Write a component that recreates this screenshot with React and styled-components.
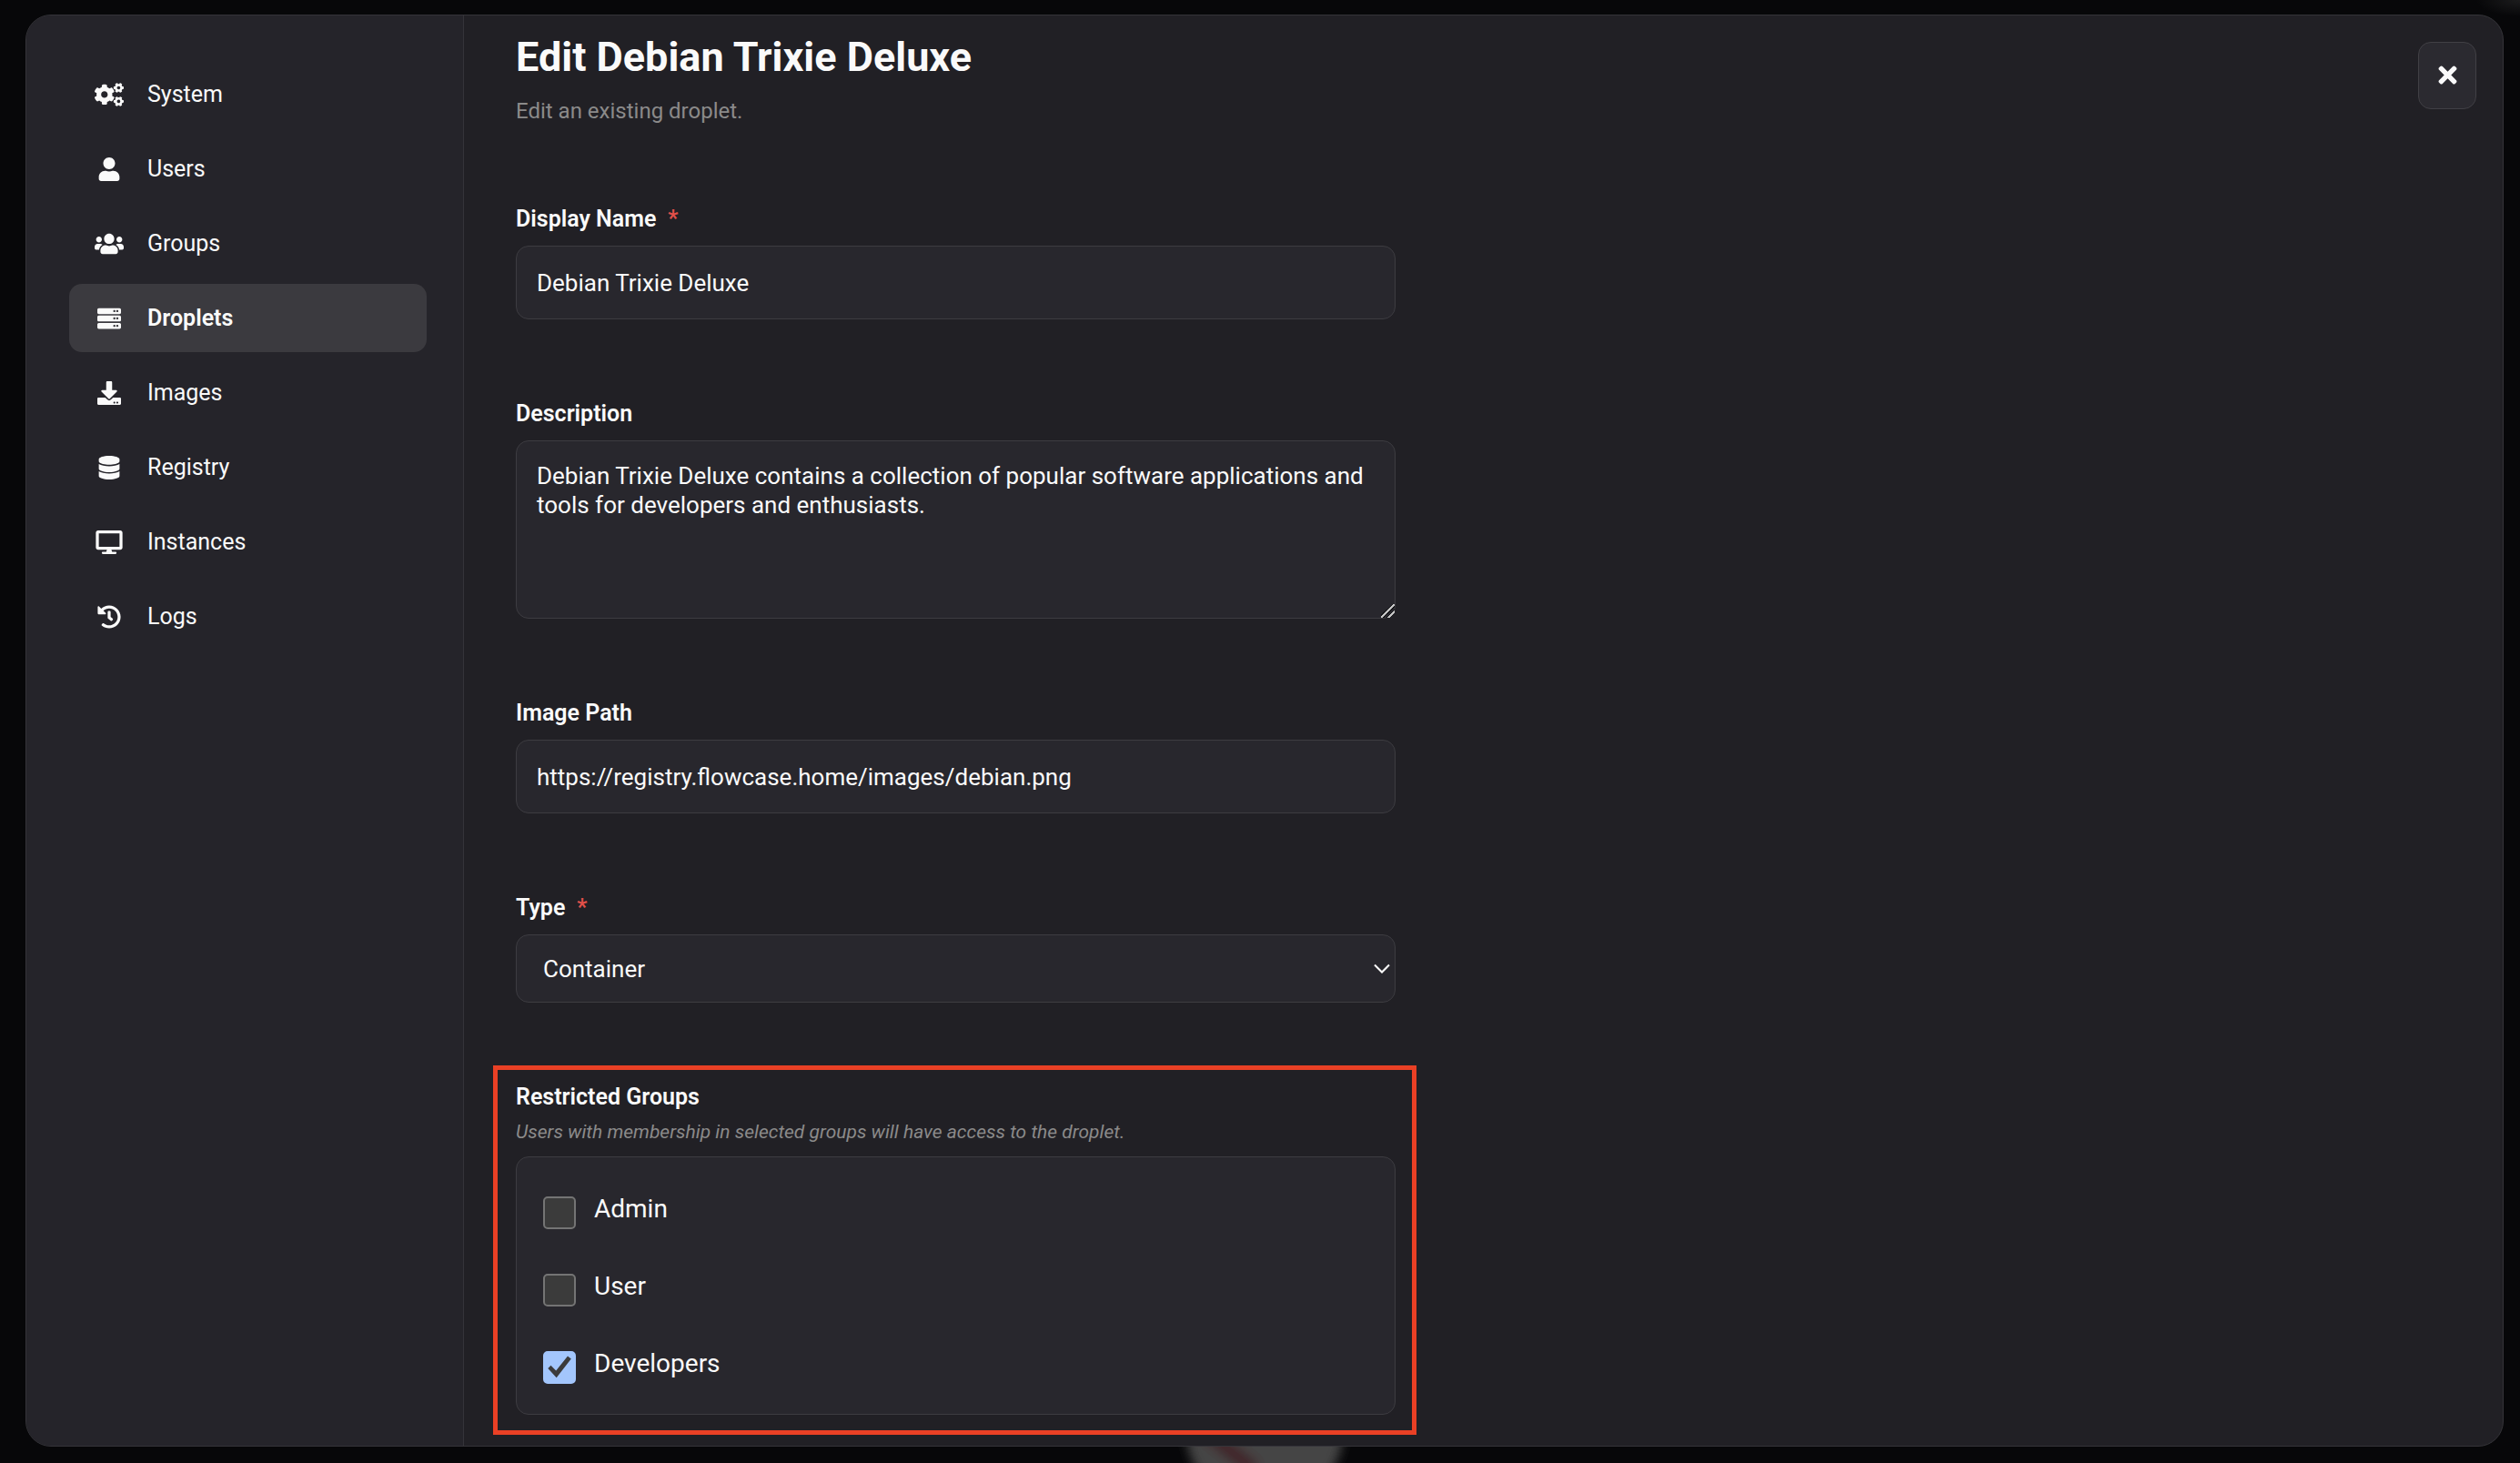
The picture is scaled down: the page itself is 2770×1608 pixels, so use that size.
import React from 'react';
import styled, { createGlobalStyle, css } from 'styled-components';
import {
  FaCogs, FaUser, FaUsers, FaServer, FaDownload,
  FaDatabase, FaDesktop, FaHistory, FaTimes,
} from 'react-icons/fa';

const color = {
  page: '#070709',
  panel: '#212025',
  sidebar: '#25242a',
  active: '#3b3a3f',
  field: '#28272d',
  border: '#3d3c41',
  line: '#353439',
  text: '#fafafa',
  muted: '#8b8a8a',
  required: '#e2504a',
  highlight: '#ea4025',
};

const GlobalStyle = createGlobalStyle`
  *, *::before, *::after { box-sizing: border-box; }
  html { color-scheme: dark; }
  body {
    margin: 0;
    background: ${color.page};
    color: ${color.text};
    font-family: Roboto, "Liberation Sans", sans-serif;
  }
  button, input, select, textarea { font: inherit; color: inherit; }
`;

const Page = styled.div`
  position: relative;
  display: flex;
  min-height: 100vh;
  padding: 16px 18px 18px 28px;
  overflow: hidden;
  background: radial-gradient(ellipse 48px 18px at 100% 0, #1c1c1d, transparent);
`;

const Backdrop = styled.svg`
  position: absolute;
  bottom: 0;
  left: 50%;
  width: 400px;
  height: 140px;
  margin-left: -200px;
`;

const Panel = styled.div`
  position: relative;
  display: flex;
  flex: 1;
  min-width: 0;
  border: 1px solid ${color.line};
  border-radius: 28px;
  background: ${color.panel};
  overflow: hidden;
`;

const Sidebar = styled.nav`
  display: flex;
  flex-direction: column;
  flex: none;
  gap: 7px;
  width: 481px;
  padding: 49px 40px 48px 47px;
  border-right: 1px solid ${color.line};
  background: ${color.sidebar};
`;

const NavLink = styled.a`
  display: flex;
  align-items: center;
  gap: 26px;
  height: 75px;
  padding: 0 28px;
  border-radius: 14px;
  color: ${color.text};
  font-size: 25px;
  line-height: 30px;
  text-decoration: none;
  ${(p) => p.$active && css`
    background: ${color.active};
    font-weight: 600;
  `}
`;

const NavIcon = styled.span`
  display: flex;
  flex: none;
  width: 32px;
  svg { width: 32px; height: 26px; }
`;

const Main = styled.main`
  display: flex;
  flex: 1;
  align-items: flex-start;
  justify-content: space-between;
  gap: 40px;
  min-width: 0;
  padding: 18px 29px 34px 57px;
`;

const Content = styled.div`
  flex: 0 1 967px;
  min-width: 0;
`;

const Title = styled.h1`
  margin: 0 0 16px;
  font-size: 45px;
  font-weight: 700;
  line-height: 56px;
`;

const Subtitle = styled.p`
  margin: 0 0 89px;
  color: ${color.muted};
  font-size: 24px;
  line-height: 30px;
`;

const Form = styled.form`
  display: flex;
  flex-direction: column;
  gap: 89px;
`;

const Field = styled.div`
  position: relative;
  display: flex;
  flex-direction: column;
  gap: 14px;
`;

const labelText = css`
  font-size: 25px;
  font-weight: 600;
  line-height: 30px;
`;

const Label = styled.label`${labelText}`;

const Required = styled.span`
  margin-left: 13px;
  color: ${color.required};
`;

const control = css`
  width: 100%;
  margin: 0;
  border: 1px solid ${color.border};
  border-radius: 14px;
  background: ${color.field};
  font-size: 26px;
  line-height: 32px;
  outline: none;
`;

const Input = styled.input`
  ${control}
  height: 81px;
  padding: 0 22px;
`;

const Textarea = styled.textarea`
  ${control}
  display: block;
  height: 196px;
  padding: 22px;
  resize: vertical;
  &::-webkit-resizer {
    background: linear-gradient(
      135deg,
      transparent 40%, #151518 40% 45%, #c4c4c4 45% 55%, #151518 55% 60%,
      transparent 60% 68%, #151518 68% 72%, #c4c4c4 72% 82%, transparent 82%
    );
  }
`;

const SelectWrap = styled.div`
  position: relative;
  display: flex;
`;

const Select = styled.select`
  ${control}
  appearance: none;
  height: 75px;
  padding: 0 48px 0 29px;
`;

const Chevron = styled.svg`
  position: absolute;
  top: 50%;
  right: 6px;
  width: 18px;
  height: 12px;
  margin-top: -6px;
  pointer-events: none;
`;

const GroupField = styled(Field)`
  &::after {
    content: '';
    position: absolute;
    inset: -20px -23px -22px -25px;
    border: 5px solid ${color.highlight};
    pointer-events: none;
  }
`;

const GroupHeading = styled.div`
  display: flex;
  flex-direction: column;
  gap: 10px;
`;

const GroupTitle = styled.div`${labelText}`;

const Hint = styled.div`
  color: ${color.muted};
  font-size: 21px;
  font-style: italic;
  line-height: 26px;
`;

const OptionList = styled.div`
  display: flex;
  flex-direction: column;
  gap: 46px;
  padding: 40px 29px 33px;
  border: 1px solid ${color.border};
  border-radius: 14px;
  background: ${color.field};
`;

const Option = styled.label`
  display: flex;
  align-items: flex-start;
  gap: 20px;
  font-size: 28px;
  line-height: 34px;
`;

const Box = styled.span`
  display: grid;
  padding-top: 3px;
  > * { grid-area: 1 / 1; }
`;

const Checkbox = styled.input`
  appearance: none;
  width: 36px;
  height: 36px;
  margin: 0;
  border: 2px solid #747474;
  border-radius: 5px;
  background: #3b3b3b;
  &:checked {
    border-color: #a3c6fc;
    background: #a3c6fc;
  }
  & + svg { display: none; }
  &:checked + svg { display: block; }
`;

const Tick = styled.svg`
  width: 36px;
  height: 36px;
  pointer-events: none;
`;

const CloseButton = styled.button`
  display: flex;
  align-items: center;
  justify-content: center;
  flex: none;
  width: 64px;
  height: 74px;
  margin-top: 11px;
  padding: 0 0 2px;
  border: 1px solid #414045;
  border-radius: 14px;
  background: #2b2a30;
  svg { width: 29px; height: 29px; }
`;

const NAV = [
  { name: 'System', icon: FaCogs },
  { name: 'Users', icon: FaUser },
  { name: 'Groups', icon: FaUsers },
  { name: 'Droplets', icon: FaServer, active: true },
  { name: 'Images', icon: FaDownload },
  { name: 'Registry', icon: FaDatabase },
  { name: 'Instances', icon: FaDesktop },
  { name: 'Logs', icon: FaHistory },
];

const GROUPS = [
  { name: 'Admin', checked: false },
  { name: 'User', checked: false },
  { name: 'Developers', checked: true },
];

export default function App() {
  return (
    <>
      <GlobalStyle />
      <Page>
        <Backdrop viewBox="0 0 400 140" aria-hidden="true">
          <defs>
            <filter id="soft" x="-40%" y="-40%" width="180%" height="180%">
              <feGaussianBlur stdDeviation="6" />
            </filter>
          </defs>
          <g filter="url(#soft)">
            <circle cx="205" cy="102" r="87" fill="#444444" />
            <path d="M134 100 L194 148" stroke="#432729" strokeWidth="18" />
          </g>
        </Backdrop>
        <Panel>
          <Sidebar>
            {NAV.map(({ name, icon: Icon, active }) => (
              <NavLink key={name} href={`#${name.toLowerCase()}`} $active={active}>
                <NavIcon><Icon /></NavIcon>
                {name}
              </NavLink>
            ))}
          </Sidebar>
          <Main>
            <Content>
              <Title>Edit Debian Trixie Deluxe</Title>
              <Subtitle>Edit an existing droplet.</Subtitle>
              <Form>
                <Field>
                  <Label htmlFor="display-name">
                    Display Name<Required>*</Required>
                  </Label>
                  <Input id="display-name" defaultValue="Debian Trixie Deluxe" />
                </Field>
                <Field>
                  <Label htmlFor="description">Description</Label>
                  <Textarea
                    id="description"
                    defaultValue="Debian Trixie Deluxe contains a collection of popular software applications and tools for developers and enthusiasts."
                  />
                </Field>
                <Field>
                  <Label htmlFor="image-path">Image Path</Label>
                  <Input
                    id="image-path"
                    defaultValue="https://registry.flowcase.home/images/debian.png"
                  />
                </Field>
                <Field>
                  <Label htmlFor="type">
                    Type<Required>*</Required>
                  </Label>
                  <SelectWrap>
                    <Select id="type" defaultValue="container">
                      <option value="container">Container</option>
                    </Select>
                    <Chevron viewBox="0 0 18 12" aria-hidden="true">
                      <path d="M1 1.5 L9 9.5 L17 1.5" fill="none" stroke="#fff" strokeWidth="2" />
                    </Chevron>
                  </SelectWrap>
                </Field>
                <GroupField role="group" aria-labelledby="groups-title">
                  <GroupHeading>
                    <GroupTitle id="groups-title">Restricted Groups</GroupTitle>
                    <Hint>Users with membership in selected groups will have access to the droplet.</Hint>
                  </GroupHeading>
                  <OptionList>
                    {GROUPS.map(({ name, checked }) => (
                      <Option key={name}>
                        <Box>
                          <Checkbox type="checkbox" defaultChecked={checked} />
                          <Tick viewBox="0 0 36 36" aria-hidden="true">
                            <path
                              d="M5.3 19 L8.5 15.8 L14.2 21.4 L27 5.6 L30.8 8.4 L14.7 29.3 Z"
                              fill="#3b3b3b"
                            />
                          </Tick>
                        </Box>
                        {name}
                      </Option>
                    ))}
                  </OptionList>
                </GroupField>
              </Form>
            </Content>
            <CloseButton type="button" aria-label="Close"><FaTimes /></CloseButton>
          </Main>
        </Panel>
      </Page>
    </>
  );
}
